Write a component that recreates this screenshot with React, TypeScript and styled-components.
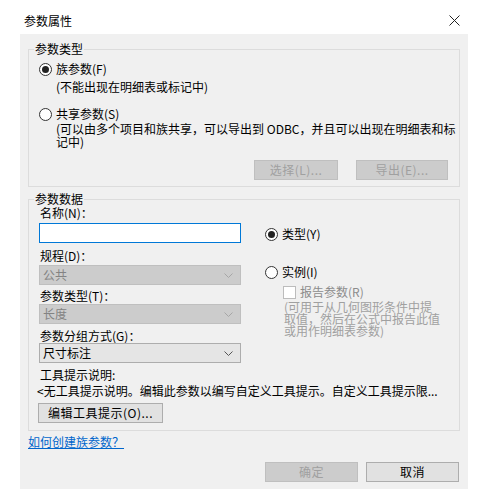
import styled, { createGlobalStyle } from "styled-components";

const GlobalStyle = createGlobalStyle`
  body {
    margin: 0;
    background: #ffffff;
    font-family: "Noto Sans CJK SC", "Microsoft YaHei", sans-serif;
    font-size: 12px;
    color: #000;
  }
`;

const Dialog = styled.div`
  width: 481px;
  height: 502px;
  display: flex;
  flex-direction: column;
`;

const TitleBar = styled.div`
  height: 34px;
  display: flex;
  justify-content: space-between;
  align-items: flex-start;
  padding: 0 21px 0 24px;
  box-sizing: border-box;
`;

const Title = styled.span`
  margin-top: 14px;
  line-height: 14px;
`;

const CloseIcon = styled.svg`
  margin-top: 15px;
`;

const Body = styled.div`
  margin: 0 13px 0 20px;
  height: 455px;
  background: #f0f0f0;
  padding: 8px 8px 0 8px;
  box-sizing: border-box;
  display: flex;
  flex-direction: column;
`;

const Group = styled.fieldset<{ $top?: number; $bottom: number }>`
  margin: ${(p) => p.$top ?? 0}px 0 0 0;
  padding: 0 11px ${(p) => p.$bottom}px 10px;
  border: 1px solid #dcdcdc;
  min-width: 0;
  display: flex;
  flex-direction: column;
`;

const Legend = styled.legend`
  margin-left: -5px;
  padding: 0 1px;
  line-height: 14px;
`;

const Line = styled.div<{ $top?: number; $left?: number }>`
  line-height: 14px;
  margin-top: ${(p) => p.$top ?? 0}px;
  margin-left: ${(p) => p.$left ?? 0}px;
  white-space: nowrap;
`;

const Para = styled.div<{ $top: number; $left: number; $lh: number; $muted?: boolean }>`
  margin-top: ${(p) => p.$top}px;
  margin-left: ${(p) => p.$left}px;
  line-height: ${(p) => p.$lh}px;
  white-space: nowrap;
  color: ${(p) => (p.$muted ? "#a0a0a0" : "#000")};
`;

const Option = styled.label<{ $top: number }>`
  display: flex;
  align-items: center;
  gap: 4px;
  margin-top: ${(p) => p.$top}px;
  line-height: 14px;
  white-space: nowrap;
`;

const Radio = styled.span<{ $checked?: boolean }>`
  width: 13px;
  height: 13px;
  box-sizing: border-box;
  border: 1px solid #333;
  border-radius: 50%;
  background: #fff;
  display: flex;
  align-items: center;
  justify-content: center;
  &::after {
    content: "";
    width: 7px;
    height: 7px;
    border-radius: 50%;
    background: ${(p) => (p.$checked ? "#222" : "transparent")};
  }
`;

const CheckRow = styled.label`
  display: flex;
  align-items: center;
  gap: 4px;
  margin: 6px 0 0 18px;
  line-height: 14px;
  color: #8c8c8c;
  white-space: nowrap;
`;

const CheckBox = styled.span`
  width: 13px;
  height: 13px;
  box-sizing: border-box;
  border: 1px solid #bcbcbc;
  background: #fff;
`;

const ButtonRow = styled.div<{ $top: number; $gap: number; $right?: number }>`
  display: flex;
  justify-content: flex-end;
  gap: ${(p) => p.$gap}px;
  margin-top: ${(p) => p.$top}px;
  margin-right: ${(p) => p.$right ?? 0}px;
`;

const Button = styled.button<{ $w: number; $top?: number }>`
  width: ${(p) => p.$w}px;
  height: 20px;
  margin-top: ${(p) => p.$top ?? 0}px;
  padding: 0;
  font: inherit;
  line-height: 18px;
  background: #e1e1e1;
  border: 1px solid #adadad;
  color: #000;
  letter-spacing: 0.5px;
  &:disabled {
    background: #cccccc;
    border-color: #bfbfbf;
    color: #a0a0a0;
  }
`;

const ToolButton = styled(Button)`
  align-self: flex-start;
  margin-left: -1px;
`;

const Columns = styled.div`
  display: flex;
  gap: 24px;
`;

const LeftCol = styled.div`
  width: 202px;
  display: flex;
  flex-direction: column;
`;

const RightCol = styled.div`
  display: flex;
  flex-direction: column;
`;

const Label = styled.div<{ $top: number }>`
  margin: ${(p) => p.$top}px 0 0 1px;
  line-height: 14px;
`;

const TextInput = styled.div`
  height: 20px;
  margin-top: 3px;
  box-sizing: border-box;
  border: 1px solid #0078d7;
  background: #fff;
`;

const Select = styled.div<{ $top: number; $disabled?: boolean }>`
  height: 20px;
  margin-top: ${(p) => p.$top}px;
  box-sizing: border-box;
  border: 1px solid ${(p) => (p.$disabled ? "#bfbfbf" : "#adadad")};
  background: ${(p) => (p.$disabled ? "#cccccc" : "#e5e5e5")};
  color: ${(p) => (p.$disabled ? "#838383" : "#000")};
  display: flex;
  align-items: center;
  justify-content: space-between;
  padding: 0 7px 0 3px;
  line-height: 18px;
`;

const Link = styled.a`
  margin-top: 4px;
  line-height: 14px;
  color: #0066cc;
  text-decoration: underline;
  align-self: flex-start;
  cursor: pointer;
`;

function Chevron({ color }: { color: string }) {
  return (
    <svg width="9" height="5" viewBox="0 0 9 5">
      <path d="M0.5 0.5 L4.5 4.5 L8.5 0.5" fill="none" stroke={color} strokeWidth="1" />
    </svg>
  );
}

function App() {
  return (
    <Dialog>
      <GlobalStyle />
      <TitleBar>
        <Title>参数属性</Title>
        <CloseIcon width="11" height="11" viewBox="0 0 11 11">
          <path d="M0.5 0.5 L10.5 10.5 M10.5 0.5 L0.5 10.5" stroke="#222" strokeWidth="1" />
        </CloseIcon>
      </TitleBar>
      <Body>
        <Group $bottom={6}>
          <Legend>参数类型</Legend>
          <Option $top={6}>
            <Radio $checked />
            族参数(F)
          </Option>
          <Line $top={4} $left={17}>
            (不能出现在明细表或标记中)
          </Line>
          <Option $top={13}>
            <Radio />
            共享参数(S)
          </Option>
          <Para $top={1} $left={17} $lh={13}>
            (可以由多个项目和族共享，可以导出到 ODBC，并且可以出现在明细表和标
            <br />
            记中)
          </Para>
          <ButtonRow $top={12} $gap={18}>
            <Button $w={84} disabled>
              选择(L)...
            </Button>
            <Button $w={92} disabled>
              导出(E)...
            </Button>
          </ButtonRow>
        </Group>
        <Group $top={5} $bottom={7}>
          <Legend>参数数据</Legend>
          <Columns>
            <LeftCol>
              <Label $top={0}>名称(N)：</Label>
              <TextInput />
              <Label $top={6}>规程(D)：</Label>
              <Select $top={2} $disabled>
                公共
                <Chevron color="#a6a6a6" />
              </Select>
              <Label $top={4}>参数类型(T)：</Label>
              <Select $top={1} $disabled>
                长度
                <Chevron color="#a6a6a6" />
              </Select>
              <Label $top={5}>参数分组方式(G)：</Label>
              <Select $top={0}>
                尺寸标注
                <Chevron color="#555" />
              </Select>
            </LeftCol>
            <RightCol>
              <Option $top={21}>
                <Radio $checked />
                类型(Y)
              </Option>
              <Option $top={24}>
                <Radio />
                实例(I)
              </Option>
              <CheckRow>
                <CheckBox />
                报告参数(R)
              </CheckRow>
              <Para $top={2} $left={19} $lh={12} $muted>
                (可用于从几何图形条件中提
                <br />
                取值，然后在公式中报告此值
                <br />
                或用作明细表参数)
              </Para>
            </RightCol>
          </Columns>
          <Label $top={5}>工具提示说明:</Label>
          <Line $top={2} $left={-2}>
            &lt;无工具提示说明。编辑此参数以编写自定义工具提示。自定义工具提示限...
          </Line>
          <ToolButton $w={125} $top={5}>
            编辑工具提示(O)...
          </ToolButton>
        </Group>
        <Link>如何创建族参数？</Link>
        <ButtonRow $top={13} $gap={8} $right={1}>
          <Button $w={93} disabled>
            确定
          </Button>
          <Button $w={93}>取消</Button>
        </ButtonRow>
      </Body>
    </Dialog>
  );
}

export default App;
